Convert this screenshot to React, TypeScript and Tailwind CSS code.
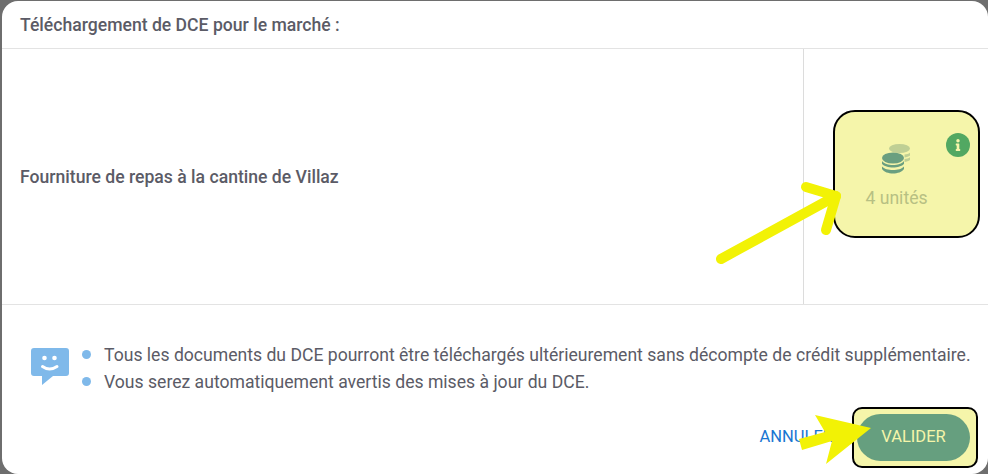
import { FaInfo } from "react-icons/fa";

function Coins() {
  return (
    <svg width="28" height="30" viewBox="0 0 28 30" className="mr-[2px] -mt-[1px] block">
      <g fill="#bfcf94">
        <ellipse cx="17.500" cy="4.500" rx="10.500" ry="4.500" />
        <path d="M22.500 10.500 C24.500 10.200 26.800 9.700 28 8.700 V11.500 C26.800 12.500 24.500 13.200 22.500 13.500 Z" />
        <path d="M22.500 15 C24.500 14.700 26.800 14.200 28 13.200 V16 C26.800 17 24.500 17.700 22.500 18 Z" />
      </g>
      <g fill="#6a9f80">
        <ellipse cx="11" cy="14" rx="11" ry="5.500" />
        <path d="M0 17 C2 19.700 6.500 21 11 21 C15.500 21 20 19.700 22 17 V19.700 C20 22.200 15.500 23.500 11 23.500 C6.500 23.500 2 22.200 0 19.700 Z" />
        <path d="M0 22.500 C2 25 6.500 26 11 26 C15.500 26 20 25 22 22.500 V25 C20 28 15.500 29.500 11 29.500 C6.500 29.500 2 28 0 25 Z" />
      </g>
    </svg>
  );
}

function ChatIcon() {
  return (
    <svg width="38" height="38" viewBox="0 0 38 38" className="block shrink-0">
      <path
        d="M3 0 H35 Q38 0 38 3 V25 Q38 28 35 28 H22 L11 37 V28 H3 Q0 28 0 25 V3 Q0 0 3 0 Z"
        fill="#7fb9ea"
      />
      <circle cx="13.500" cy="10" r="2.300" fill="#fff" />
      <circle cx="23.500" cy="10" r="2.300" fill="#fff" />
      <path d="M11.500 18.500 Q18.500 23.500 26 18.500" fill="none" stroke="#fff" strokeWidth="3" strokeLinecap="round" />
    </svg>
  );
}

export default function App() {
  return (
    <div className="w-[988px] h-[474px] overflow-hidden bg-[#6e6e6e] pl-[2px] pt-[1px] font-['Roboto',sans-serif]">
      <div className="relative flex h-[473px] w-[986px] flex-col rounded-[16px] bg-white text-[#5b5b66]">
        <div className="flex h-[48px] items-center border-b border-[#e3e3e3] pl-[18px] pt-[2px] text-[17.6px] font-medium">
          Téléchargement de DCE pour le marché :
        </div>

        <div className="flex h-[256px] border-b border-[#e3e3e3]">
          <div className="flex flex-1 items-center pl-[18px] pt-[2px] text-[17.6px] font-medium">
            Fourniture de repas à la cantine de Villaz
          </div>
          <div className="flex w-[185px] items-center border-l border-[#dcdcdc] pb-[6px] pl-[29px]">
            <div className="relative flex h-[128px] w-[147px] flex-col items-center rounded-[22px] border-2 border-black bg-[#f5f5aa] pr-[20px] pt-[33px]">
              <Coins />
              <div className="mt-[14px] text-[17.6px] leading-[20px] text-[#b7c083]">4 unités</div>
              <div className="absolute right-[8px] top-[21px] flex h-[24px] w-[24px] items-center justify-center rounded-full bg-[#52a862] text-[#f5f5aa]">
                <FaInfo size={12} />
              </div>
            </div>
          </div>
        </div>

        <div className="flex flex-1 flex-col pl-[29px]">
          <div className="mt-[36px] flex items-start">
            <div className="mt-[7px]">
              <ChatIcon />
            </div>
            <ul className="ml-[13px] mt-[1px] text-[17.6px] leading-[27px]">
              <li className="flex items-center">
                <span className="mb-[2px] mr-[13px] h-[9px] w-[9px] rounded-full bg-[#7fb9ea]" />
                Tous les documents du DCE pourront être téléchargés ultérieurement sans décompte de crédit supplémentaire.
              </li>
              <li className="flex items-center">
                <span className="mb-[2px] mr-[13px] h-[9px] w-[9px] rounded-full bg-[#7fb9ea]" />
                Vous serez automatiquement avertis des mises à jour du DCE.
              </li>
            </ul>
          </div>
          <div className="mt-[11px] flex items-center justify-end pr-[10px]">
            <span className="mr-[19px] text-[16.5px] text-[#1976d2]">ANNULER</span>
            <div className="flex h-[61px] w-[126px] items-center rounded-[10px] border-2 border-black bg-[#f5f5aa] pl-[3px]">
              <div className="flex h-[47px] w-[113px] items-center justify-center rounded-full bg-[#669f7f] text-[16.5px] text-[#f5f5aa]">
                VALIDER
              </div>
            </div>
          </div>
        </div>

        {/* annotation arrows */}
        <svg className="absolute left-0 top-0 pointer-events-none" width="986" height="473" viewBox="0 0 986 473" fill="none">
          <g stroke="#f2f205" strokeWidth="10" strokeLinecap="round" strokeLinejoin="round">
            <path d="M719 258 L834 195" />
            <path d="M804 186 L834 195 L824 229" />
          </g>
          <path d="M813 414 L869 427 L824 463 L830 440 L800 449 L797 438 L823 431 Z" fill="#f2f205" />
        </svg>
      </div>
    </div>
  );
}
